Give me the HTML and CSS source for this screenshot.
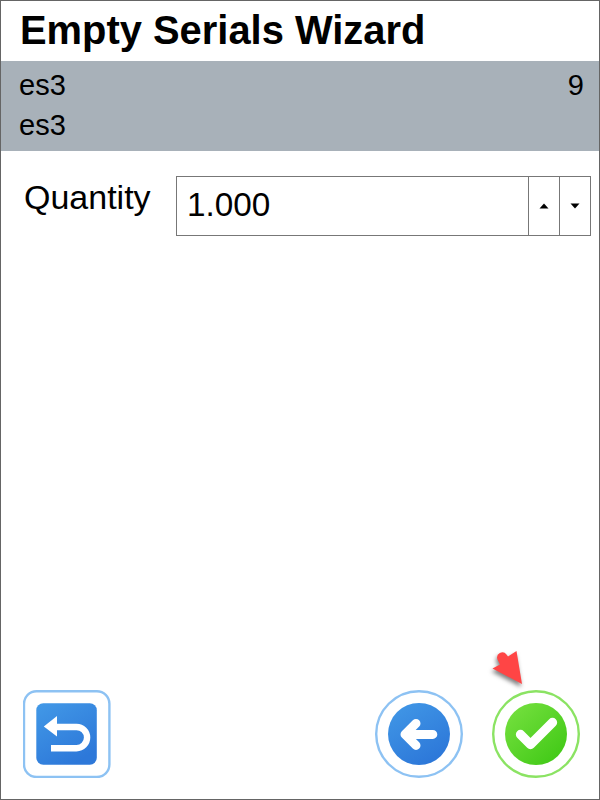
FILE: index.html
```
<!DOCTYPE html>
<html lang="en">
<head>
<meta charset="utf-8">
<title>Empty Serials Wizard</title>
<link rel="stylesheet" href="styles.css">
</head>
<body>
<main class="window">
  <h1 class="title"><span>Empty Serials Wizard</span></h1>
  <section class="summary">
    <div class="summary-row"><span>es3</span><span>9</span></div>
    <div class="summary-row"><span>es3</span></div>
  </section>
  <section class="field">
    <label class="label" for="quantity">Quantity</label>
    <div class="spinner">
      <div class="value" id="quantity">1.000</div>
      <button class="step" aria-label="Increase"><svg width="10" height="6" viewBox="0 0 10 6"><path d="M.5 5.500 5 .5l4.500 5z"/></svg></button>
      <button class="step" aria-label="Decrease"><svg width="10" height="6" viewBox="0 0 10 6"><path d="M.5.5 5 5.500 9.500.5z"/></svg></button>
    </div>
  </section>
  <footer class="actions">
    <button class="action" aria-label="Undo">
      <svg width="88" height="88" viewBox="0 0 88 88">
        <defs><linearGradient id="blue" x1="0" y1="0" x2=".6" y2="1"><stop offset="0" stop-color="#4299e7"/><stop offset="1" stop-color="#2d78d9"/></linearGradient></defs>
        <rect x="1" y="1.200" width="85.400" height="85.800" rx="12.500" fill="#fff" stroke="#8dc2f3" stroke-width="2.400"/>
        <rect x="13.300" y="13.300" width="60.500" height="61.400" rx="7" fill="url(#blue)"/>
        <path d="M32 37H53.500a10.600 10.600 0 0 1 0 21.200H28" fill="none" stroke="#fff" stroke-width="6.400"/>
        <path d="M20.800 36.500 34 26V46.500z" fill="#fff"/>
      </svg>
    </button>
    <button class="action back" aria-label="Back">
      <svg width="88" height="88" viewBox="0 0 88 88">
        <circle cx="44" cy="44" r="42.800" fill="#fff" stroke="#8dc2f3" stroke-width="2.400"/>
        <circle cx="44" cy="44" r="31" fill="url(#blue)"/>
        <path d="M57.800 44.400H31M41 33.400 30 44.400 41 55.400" fill="none" stroke="#fff" stroke-width="9" stroke-linecap="round" stroke-linejoin="round"/>
      </svg>
    </button>
    <button class="action" aria-label="Confirm">
      <svg width="88" height="88" viewBox="0 0 88 88">
        <defs><linearGradient id="green" x1=".1" y1=".1" x2=".85" y2=".9"><stop offset="0" stop-color="#73df3d"/><stop offset="1" stop-color="#43ca18"/></linearGradient></defs>
        <circle cx="44" cy="44" r="42.800" fill="#fff" stroke="#8be363" stroke-width="2.400"/>
        <circle cx="44" cy="44" r="31" fill="url(#green)"/>
        <path d="M28.500 44.500 38.500 54.500 60.500 32.500" fill="none" stroke="#fff" stroke-width="9.300" stroke-linecap="round" stroke-linejoin="round"/>
      </svg>
      <svg class="pointer" width="44" height="44" viewBox="0 0 44 44"><path d="M35 40 29.500 7 21 12.500 19.500 10.500A5.200 5.200 0 0 0 10.500 15.500L13 20.500 5.500 24.500z"/></svg>
    </button>
  </footer>
</main>
</body>
</html>
```
FILE: styles.css
```
* { box-sizing: border-box; }
body {
  margin: 0;
  font-family: "Liberation Sans", Arial, sans-serif;
  color: #000;
}
button {
  margin: 0;
  padding: 0;
  border: 0;
  background: none;
}
svg { display: block; }
.window {
  display: flex;
  flex-direction: column;
  width: 600px;
  height: 800px;
  border: 1px solid #656565;
  background: #fff;
}
.title {
  height: 60px;
  margin: 0;
  padding-left: 19px;
  font-size: 39.900px;
  line-height: 59px;
  white-space: nowrap;
}
.summary {
  height: 90px;
  padding: 4px 15px 0 18px;
  background: #a8b1b9;
  font-size: 29px;
  line-height: 40px;
}
.summary-row {
  display: flex;
  justify-content: space-between;
}
.field {
  display: flex;
  justify-content: space-between;
  padding: 25px 8px 0 23px;
}
.label {
  font-size: 34px;
  line-height: 43px;
}
.spinner {
  display: flex;
  width: 415px;
  height: 60px;
  border: 1px solid #777;
}
.value {
  flex: 1;
  padding-left: 10px;
  font-size: 33.300px;
  line-height: 56px;
}
.step {
  display: grid;
  place-items: center;
  width: 31px;
  border-left: 1px solid #777;
}
.actions {
  display: flex;
  margin-top: auto;
  padding: 0 19px 21px 22px;
}
.action {
  position: relative;
  width: 88px;
  height: 88px;
}
.back {
  margin-left: auto;
  margin-right: 29px;
}
.pointer {
  position: absolute;
  left: -5px;
  top: -46px;
  fill: #ff4545;
  overflow: visible;
  filter: drop-shadow(-1px 3px 2px rgba(0, 0, 0, .5));
}
```
